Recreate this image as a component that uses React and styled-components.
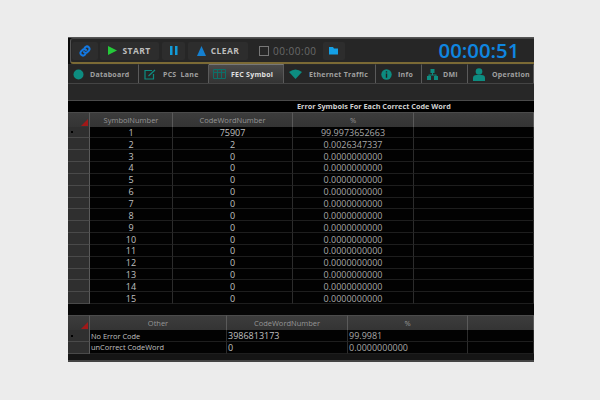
import React from "react";
import styled, { createGlobalStyle } from "styled-components";

const Global = createGlobalStyle`
  html, body { margin: 0; padding: 0; background: #ececec; }
  body { width: 600px; height: 400px; overflow: hidden; font-family: "Open Sans", "Liberation Sans", sans-serif; }
`;
const Page = styled.div`
  padding: 37px 0 0 68px;
`;
const Win = styled.div`
  width: 466px; height: 325px; background: #0a0a0a; display: flex; flex-direction: column;
  border-top: 1px solid #555; overflow: hidden; box-sizing: border-box;
`;
const Toolbar = styled.div`
  height: 26px; flex: none; box-sizing: border-box; display: flex; align-items: center;
  background: #262626; border-bottom: 2px solid #7b6a35; margin-left: 2px; border-left: 1px solid #555;
  border-top: 1px solid #444; border-radius: 3px 0 0 3px;
`;
const ToolBtn = styled.div`
  height: 18px; width: ${p => p.$w}px; margin-left: ${p => p.$ml || 0}px; flex: none; display: flex; align-items: center; justify-content: center; gap: ${p => p.$gap || 5}px;
  background: #2d2d2d; border-radius: 2px;
  color: #bdbdbd; font-size: 8.5px; font-weight: 700; letter-spacing: .4px;
`;
const TimeText = styled.span`
  color: #6a6a6a; font-size: 10px; letter-spacing: .5px; margin-left: 4px;
`;
const CheckBox = styled.span`
  width: 8px; height: 8px; border: 1px solid #777; margin-left: 11px; flex: none;
`;
const Clock = styled.span`
  color: #0f86e0; font-size: 20.3px; font-weight: 600; margin-left: 94px; line-height: 1;
`;
const Tabs = styled.div`
  height: 20px; flex: none; display: flex; background: #222; box-sizing: border-box; border-bottom: 1px solid #444;
`;
const Tab = styled.div`
  width: ${p => p.$w}px; flex: none; box-sizing: border-box; display: flex; align-items: center; gap: ${p => p.$gap}px; padding-left: ${p => p.$pl}px;
  border-right: 1px solid #5a5a5a; border-top: 1px solid ${p => p.$active ? "#777" : "#2a2a2a"};
  background: ${p => p.$active ? "linear-gradient(#4a4a4a,#333)" : "#262626"};
  color: ${p => p.$active ? "#e0e0e0" : "#a0a0a0"}; font-size: 7px; font-weight: 700; letter-spacing: .25px; white-space: pre; overflow: hidden;
`;
const Blank = styled.div`
  height: 16px; flex: none; background: #272727; border-bottom: 1px solid #4a4a4a;
`;
const TitleRow = styled.div`
  height: 11px; flex: none; background: #000; color: #d0d0d0; font-size: 7.3px; font-weight: 700; line-height: 11px;
  padding-left: 229px; white-space: nowrap;
`;
const Grid = styled.div`
  display: grid; grid-template-columns: ${p => p.$cols}; flex: none;
`;
const HeadCell = styled.div`
  height: ${p => p.$h}px; box-sizing: border-box; background: linear-gradient(#3c3c3c,#343434); border-right: 1px solid #5a5a5a;
  border-top: 1px solid #4b4b4b; color: #969696; font-size: 7.5px; display: flex; align-items: center; justify-content: center; position: relative;
`;
const Corner = styled.i`
  position: absolute; right: 1px; bottom: 1px; width: 0; height: 0; border-left: 7px solid transparent; border-bottom: 7px solid #a01818;
`;
const RowHead = styled.div`
  height: ${p => p.$h}px; box-sizing: border-box; background: #2f2f2f; border-bottom: 1px solid #4a4a4a; border-right: 1px solid #5a5a5a;
  display: flex; align-items: center; padding-left: 3px;
`;
const Mark = styled.i`
  width: 2px; height: 2px; background: #000;
`;
const Cell = styled.div`
  height: ${p => p.$h}px; box-sizing: border-box; background: #020202; border-right: 1px solid #2c2c2c; border-bottom: 1px solid #1e1e1e;
  color: ${p => p.$dim ? "#a8a8a8" : "#c0c0c0"}; font-size: ${p => p.$fs || 9}px; display: flex; align-items: center;
  padding-left: ${p => p.$left ? 1 : 0}px; padding-top: ${p => p.$left ? 0 : 1}px;
  justify-content: ${p => p.$left ? "flex-start" : "center"}; white-space: nowrap;
`;
const Gap = styled.div`
  height: ${p => p.$h}px; flex: none; background: #050505;
`;
const Foot = styled.div`
  flex: 1; background: #151515; border-bottom: 2px solid #444;
`;

const Link = () => (
  <svg width="12" height="12" viewBox="0 0 24 24" fill="none" stroke="#1478e0" strokeWidth="4" strokeLinecap="round">
    <path d="M10 14a5 5 0 0 0 7 0l3-3a5 5 0 0 0-7-7l-1.5 1.5" /><path d="M14 10a5 5 0 0 0-7 0l-3 3a5 5 0 0 0 7 7l1.5-1.5" />
  </svg>
);
const Play = () => <svg width="9" height="9" viewBox="0 0 10 10"><path d="M0 0L10 5L0 10Z" fill="#25c93a" /></svg>;
const Pause = () => (
  <svg width="8" height="9" viewBox="0 0 8 9"><path d="M0 0H2.5V9H0ZM5 0H7.5V9H5Z" fill="#129bd8" /></svg>
);
const Clear = () => <svg width="9" height="10" viewBox="0 0 9 10"><path d="M4.5 0L9 10H0Z" fill="#1580d0" /></svg>;
const Folder = () => (
  <svg width="10" height="8" viewBox="0 0 10 8"><path d="M0 0H4L5 1.5H9V7.5H0Z" fill="#14a0e6" /></svg>
);
const teal = "#0d8c80";
const Dot = () => <svg width="11" height="11" viewBox="0 0 11 11"><circle cx="5.5" cy="5.5" r="5" fill={teal} /></svg>;
const Edit = () => (
  <svg width="12" height="11" viewBox="0 0 12 11" fill="none" stroke={teal} strokeWidth="1.2">
    <path d="M8 1.5H1V10H9.5V5" /><path d="M4.5 7L11 1" />
  </svg>
);
const GridIcon = () => (
  <svg width="13" height="10" viewBox="0 0 13 10" fill="none" stroke="#0d6f68" strokeWidth="1">
    <path d="M.5.5H12.5V9.5H.5ZM.5 3.5H12.5M4.5.5V9.5M8.5.5V9.5" />
  </svg>
);
const Wifi = () => (
  <svg width="13" height="10" viewBox="0 0 13 10"><path d="M0 3Q6.5 -2 13 3L6.5 10Z" fill={teal} /></svg>
);
const Info = () => (
  <svg width="11" height="11" viewBox="0 0 11 11"><circle cx="5.5" cy="5.5" r="5.2" fill={teal} /><path d="M4.8 2.2H6.2V3.6H4.8ZM4.8 4.6H6.2V8.8H4.8Z" fill="#222" /></svg>
);
const Tree = () => (
  <svg width="11" height="11" viewBox="0 0 11 11" fill={teal}>
    <path d="M3.5 0H7.5V4H3.5ZM5 4H6V6H5ZM0 7H4V11H0ZM7 7H11V11H7ZM1.5 5.5H9.5V7H8.5V6.5H2.5V7H1.5Z" />
  </svg>
);
const User = () => (
  <svg width="12" height="13" viewBox="0 0 12 13" fill={teal}><circle cx="6" cy="3.5" r="3.3" /><path d="M0 13V10Q0 7 3.5 7H8.5Q12 7 12 10V13Z" /></svg>
);

const tabs = [
  { l: "Databoard", w: 71, i: <Dot />, gap: 6, pl: 5 },
  { l: "PCS  Lane", w: 70, i: <Edit />, gap: 7, pl: 5 },
  { l: "FEC Symbol", w: 75, i: <GridIcon />, active: true, gap: 5, pl: 4 },
  { l: "Ethernet Traffic", w: 92, i: <Wifi />, gap: 7, pl: 5 },
  { l: "Info", w: 46, i: <Info />, gap: 6, pl: 5 },
  { l: "DMI", w: 46, i: <Tree />, gap: 5, pl: 5 },
  { l: "Operation", w: 66, i: <User />, gap: 7, pl: 5 },
];
const rows = [
  ["1", "75907", "99.9973652663"], ["2", "2", "0.0026347337"],
  ...Array.from({ length: 13 }, (_, i) => [String(i + 3), "0", "0.0000000000"]),
];
const H = 11.85;

export default function App() {
  return (
    <Page>
      <Global />
      <Win>
        <Toolbar>
          <ToolBtn $w={26} $ml={1}><Link /></ToolBtn>
          <ToolBtn $w={59} $ml={2}><Play /><span>START</span></ToolBtn>
          <ToolBtn $w={23} $ml={3}><Pause /></ToolBtn>
          <ToolBtn $w={60} $ml={3}><Clear /><span>CLEAR</span></ToolBtn>
          <CheckBox />
          <TimeText>00:00:00</TimeText>
          <ToolBtn $w={22} $ml={6}><Folder /></ToolBtn>
          <Clock>00:00:51</Clock>
        </Toolbar>
        <Tabs>
          {tabs.map(t => (
            <Tab key={t.l} $w={t.w} $active={t.active} $gap={t.gap} $pl={t.pl}>{t.i}<span>{t.l}</span></Tab>
          ))}
        </Tabs>
        <Blank />
        <TitleRow>Error Symbols For Each Correct Code Word</TitleRow>
        <Grid $cols="22px 83px 120px 121px 120px">
          <HeadCell $h={14.5}><Corner /></HeadCell>
          <HeadCell $h={14.5}>SymbolNumber</HeadCell>
          <HeadCell $h={14.5}>CodeWordNumber</HeadCell>
          <HeadCell $h={14.5}>%</HeadCell>
          <HeadCell $h={14.5} />
          {rows.map((r, i) => (
            <React.Fragment key={r[0]}>
              <RowHead $h={H}>{i === 0 && <Mark />}</RowHead>
              <Cell $h={H}>{r[0]}</Cell>
              <Cell $h={H}>{r[1]}</Cell>
              <Cell $h={H} $dim>{r[2]}</Cell>
              <Cell $h={H} />
            </React.Fragment>
          ))}
        </Grid>
        <Gap $h={11} />
        <Grid $cols="22px 137px 121px 120px 66px">
          <HeadCell $h={15}><Corner /></HeadCell>
          <HeadCell $h={15}>Other</HeadCell>
          <HeadCell $h={15}>CodeWordNumber</HeadCell>
          <HeadCell $h={15}>%</HeadCell>
          <HeadCell $h={15} />
          <RowHead $h={H}><Mark /></RowHead>
          <Cell $h={H} $left $fs={7.4}>No Error Code</Cell>
          <Cell $h={H} $left>3986813173</Cell>
          <Cell $h={H} $left $dim>99.9981</Cell>
          <Cell $h={H} $left />
          <RowHead $h={H} />
          <Cell $h={H} $left $fs={7.4}>unCorrect CodeWord</Cell>
          <Cell $h={H} $left>0</Cell>
          <Cell $h={H} $left $dim>0.0000000000</Cell>
          <Cell $h={H} $left />
        </Grid>
        <Foot />
      </Win>
    </Page>
  );
}
